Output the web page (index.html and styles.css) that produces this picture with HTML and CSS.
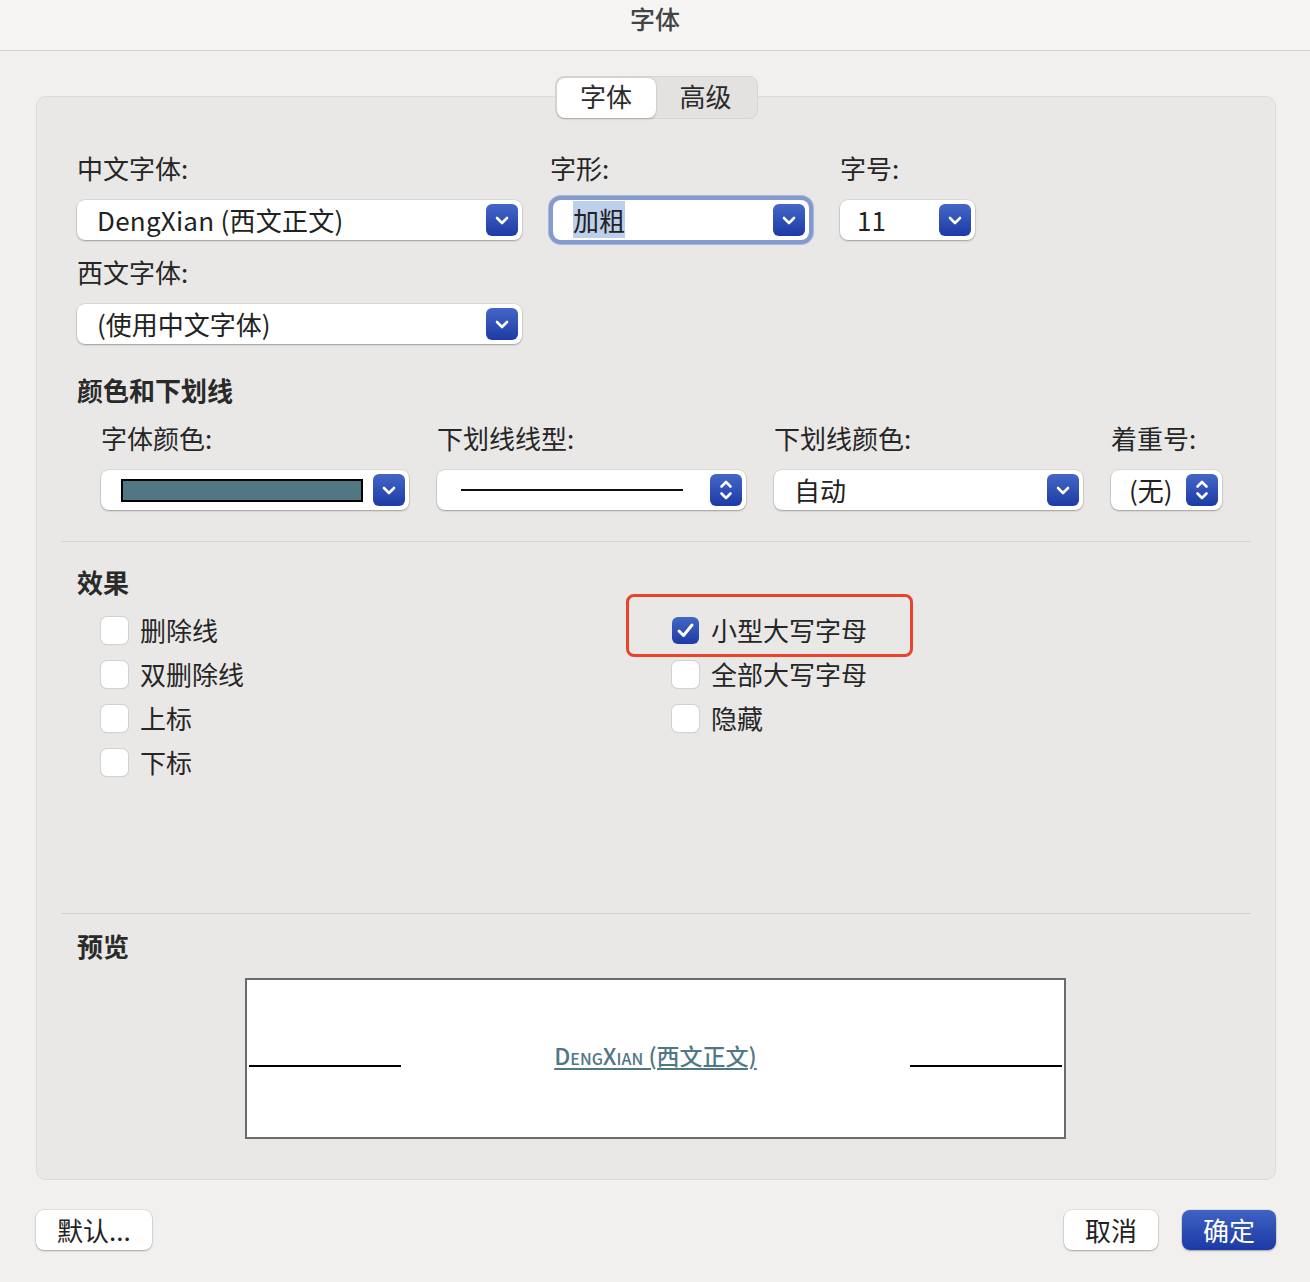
FILE: index.html
```html
<!DOCTYPE html>
<html lang="zh-CN">
<head>
<meta charset="utf-8">
<title>字体</title>
<link rel="stylesheet" href="styles.css">
</head>
<body>
<div class="titlebar">字体</div>
<div class="window">
  <div class="tabs">
    <span class="tab active">字体</span>
    <span class="tab">高级</span>
  </div>
  <div class="panel">
    <div class="fonts-grid">
      <div class="field">
        <div class="label">中文字体:</div>
        <div class="select"><span class="value latin">DengXian (西文正文)</span>
          <span class="btn"><svg viewBox="0 0 32 32"><path d="M11 14 L16 19 L21 14"/></svg></span></div>
      </div>
      <div class="field">
        <div class="label">字形:</div>
        <div class="select focused"><span class="value"><span class="hl">加粗</span></span>
          <span class="btn"><svg viewBox="0 0 32 32"><path d="M11 14 L16 19 L21 14"/></svg></span></div>
      </div>
      <div class="field">
        <div class="label">字号:</div>
        <div class="select size"><span class="value">11</span>
          <span class="btn"><svg viewBox="0 0 32 32"><path d="M11 14 L16 19 L21 14"/></svg></span></div>
      </div>
      <div class="field">
        <div class="label">西文字体:</div>
        <div class="select"><span class="value">(使用中文字体)</span>
          <span class="btn"><svg viewBox="0 0 32 32"><path d="M11 14 L16 19 L21 14"/></svg></span></div>
      </div>
    </div>

    <div class="heading">颜色和下划线</div>
    <div class="underline-grid">
      <div class="field">
        <div class="label">字体颜色:</div>
        <div class="select"><span class="swatch"></span>
          <span class="btn"><svg viewBox="0 0 32 32"><path d="M11 14 L16 19 L21 14"/></svg></span></div>
      </div>
      <div class="field">
        <div class="label">下划线线型:</div>
        <div class="select"><span class="line-sample"></span>
          <span class="btn"><svg viewBox="0 0 32 32"><path d="M11.5 12.5 L16 8 L20.5 12.5 M11.5 19.5 L16 24 L20.5 19.5"/></svg></span></div>
      </div>
      <div class="field">
        <div class="label">下划线颜色:</div>
        <div class="select"><span class="value">自动</span>
          <span class="btn"><svg viewBox="0 0 32 32"><path d="M11 14 L16 19 L21 14"/></svg></span></div>
      </div>
      <div class="field">
        <div class="label">着重号:</div>
        <div class="select compact"><span class="value">(无)</span>
          <span class="btn"><svg viewBox="0 0 32 32"><path d="M11.5 12.5 L16 8 L20.5 12.5 M11.5 19.5 L16 24 L20.5 19.5"/></svg></span></div>
      </div>
    </div>

    <div class="sep"></div>

    <div class="heading h-effects">效果</div>
    <div class="effects">
      <div class="col">
        <label class="check"><span class="box"></span>删除线</label>
        <label class="check"><span class="box"></span>双删除线</label>
        <label class="check"><span class="box"></span>上标</label>
        <label class="check"><span class="box"></span>下标</label>
      </div>
      <div class="col">
        <label class="check marked"><span class="box on"><svg viewBox="0 0 27 27"><path d="M7 14 L11.5 18.5 L20 8"/></svg></span>小型大写字母<span class="annot"></span></label>
        <label class="check"><span class="box"></span>全部大写字母</label>
        <label class="check"><span class="box"></span>隐藏</label>
      </div>
    </div>

    <div class="sep sep2"></div>

    <div class="heading h-preview">预览</div>
    <div class="preview">
      <span class="pline"></span>
      <span class="ptext">DengXian (西文正文)</span>
      <span class="pline"></span>
    </div>
  </div>

  <div class="footer">
    <span class="button">默认...</span>
    <div class="right">
      <span class="button">取消</span>
      <span class="button primary">确定</span>
    </div>
  </div>
</div>
</body>
</html>
```

FILE: styles.css
```css
* { box-sizing: border-box; }
html, body { margin: 0; padding: 0; }
body {
  width: 1310px;
  height: 1282px;
  background: #f1f0ee;
  font-family: "Noto Sans CJK SC", "Noto Sans", sans-serif;
  color: #262626;
  font-size: 26px;
  line-height: 30px;
  overflow: hidden;
}

.titlebar {
  height: 51px;
  background: #f6f5f3;
  border-bottom: 1px solid #d2d1cf;
  text-align: center;
  font-size: 25px;
  font-weight: 500;
  color: #444;
  line-height: 37px;
}

.window {
  padding: 0 34px 0 36px;
}

.tabs {
  position: relative;
  z-index: 1;
  width: 203px;
  height: 43px;
  margin: 25px auto 0;
  display: flex;
  align-items: center;
  padding: 1px;
  background: #e3e2e0;
  border: 1px solid #d7d6d4;
  border-radius: 9px;
}
.tab {
  flex: 1;
  height: 40px;
  display: flex;
  align-items: center;
  justify-content: center;
  font-size: 26px;
  color: #2b2b2b;
  padding-bottom: 3px;
}
.tab.active {
  flex: 0 0 99px;
  background: #fff;
  border-radius: 8px;
  box-shadow: 0 0.5px 2px rgba(0,0,0,0.25);
}

.panel {
  margin-top: -23px;
  background: #e9e8e6;
  border: 1px solid #dcdbd9;
  border-radius: 10px;
  padding: 56px 40px 40px 40px;
}

.label { height: 30px; white-space: nowrap; }

.field {
  display: flex;
  flex-direction: column;
  gap: 17px;
}

.fonts-grid {
  display: grid;
  grid-template-columns: 445px 262px 135px;
  column-gap: 28px;
  row-gap: 17px;
}

.select {
  height: 40px;
  background: #fff;
  border-radius: 8px;
  box-shadow: 0 0 0 0.5px rgba(0,0,0,0.12), 0 1px 2px rgba(0,0,0,0.28);
  display: flex;
  align-items: center;
  padding: 0 4px 0 20px;
  gap: 10px;
}
.select .value {
  flex: 1;
  white-space: nowrap;
  color: #222;
  font-size: 26px;
}
.select .value.latin { letter-spacing: 0.25px; }
.select.size { padding-left: 17px; }
.select.focused {
  margin: 0 3px 0 3px;
  box-shadow: 0 0 0 4px #8499cd, 0 0 0 5px #a8b6da;
}
.hl { background: #bccfeb; }

.btn {
  flex: 0 0 32px;
  width: 32px;
  height: 32px;
  margin-left: auto;
  border-radius: 6px;
  background: linear-gradient(#4467c6, #1d3aa6);
  display: flex;
  align-items: center;
  justify-content: center;
}
.btn svg { width: 32px; height: 32px; }
.btn path {
  fill: none;
  stroke: #fff;
  stroke-width: 2.6;
  stroke-linecap: round;
  stroke-linejoin: round;
}

.heading {
  margin-top: 31px;
  height: 30px;
  font-weight: 700;
  font-size: 26px;
  color: #2a2a2a;
}

.underline-grid {
  margin-top: 18px;
  padding-left: 24px;
  display: grid;
  grid-template-columns: 308px 309px 309px 111px;
  column-gap: 28px;
}

.swatch {
  flex: 0 0 242px;
  height: 23px;
  background: #527784;
  border: 2px solid #000;
}
.line-sample {
  flex: 0 0 222px;
  margin-left: 4px;
  height: 2px;
  background: #111;
}
.select.compact { padding-left: 18px; }

.sep {
  margin: 31px -16px 0;
  height: 1px;
  background: #d3d2d0;
}
.h-effects { margin-top: 25px; }

.effects {
  margin-top: 11px;
  padding-left: 24px;
  display: grid;
  grid-template-columns: 571px 1fr;
}
.check {
  position: relative;
  height: 44px;
  display: flex;
  align-items: center;
  gap: 12px;
  white-space: nowrap;
}
.box {
  width: 27px;
  height: 27px;
  border-radius: 6px;
  background: #fff;
  box-shadow: 0 0 0 1px #d3d2d0, 0 0.5px 1px rgba(0,0,0,0.15);
  display: flex;
  align-items: center;
  justify-content: center;
}
.box.on {
  background: linear-gradient(#4467c6, #1d3aa6);
  box-shadow: none;
}
.box svg { width: 27px; height: 27px; }
.box path {
  fill: none;
  stroke: #fff;
  stroke-width: 3;
  stroke-linecap: round;
  stroke-linejoin: round;
}
.annot {
  position: absolute;
  left: -46px;
  top: -14px;
  width: 287px;
  height: 63px;
  border: 3px solid #e8432c;
  border-radius: 8px;
}

.sep2 { margin-top: 129px; }
.h-preview { margin-top: 17px; }

.preview {
  margin: 17px 0 0 168px;
  width: 821px;
  height: 161px;
  background: #fff;
  border: 2px solid #6b6b6b;
  display: flex;
  align-items: center;
  padding: 14px 2px 0;
}
.pline {
  flex: 0 0 152px;
  height: 2px;
  background: #000;
}
.ptext {
  flex: 1;
  text-align: center;
  font-size: 23px;
  line-height: 26px;
  font-weight: 500;
  font-variant: small-caps;
  color: #527784;
  text-decoration: underline;
  text-decoration-thickness: 2px;
  text-underline-offset: 3px;
  margin-bottom: 22px;
}

.footer {
  padding-top: 30px;
  display: flex;
  justify-content: space-between;
}
.footer .right { display: flex; gap: 24px; }
.button {
  height: 40px;
  padding: 0 21px;
  background: #fff;
  border-radius: 8px;
  box-shadow: 0 0 0 0.5px rgba(0,0,0,0.12), 0 1px 2px rgba(0,0,0,0.28);
  display: flex;
  align-items: center;
  font-size: 26px;
  color: #222;
}
.button.primary {
  background: linear-gradient(#3f62c3, #1c39a5);
  color: #fff;
}
```
